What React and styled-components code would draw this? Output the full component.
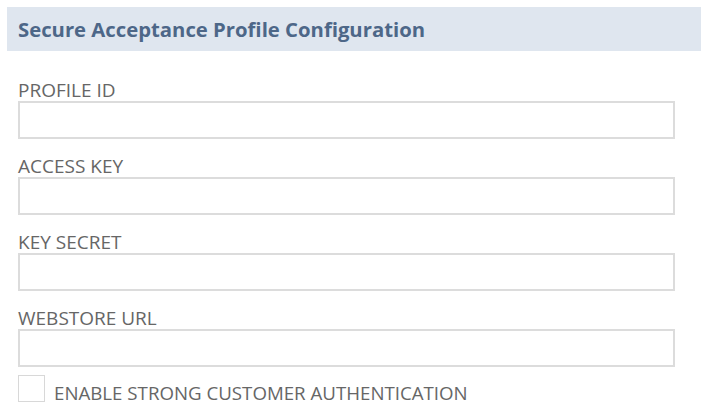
import React from "react";
import styled, { createGlobalStyle } from "styled-components";

const Global = createGlobalStyle`
  html, body { margin: 0; padding: 0; background: #fff; }
  body { font-family: "Open Sans", "Liberation Sans", sans-serif; }
`;

const Page = styled.div`
  width: 701px;
  height: 416px;
  padding: 7px 0 0 7px;
  box-sizing: border-box;
  overflow: hidden;
`;

const Header = styled.div`
  height: 44px;
  background: #dfe6ef;
  display: flex;
  align-items: center;
  padding-left: 11px;
  padding-bottom: 1px;
  box-sizing: border-box;
  font-size: 20.3px;
  font-weight: 700;
  color: #4d6788;
`;

const Form = styled.div`
  display: flex;
  flex-direction: column;
  gap: 16px;
  padding: 28px 0 0 11px;
  width: 657px;
`;

const Field = styled.div`
  display: flex;
  flex-direction: column;
`;

const Label = styled.label`
  font-size: 19px;
  line-height: 22px;
  color: #666;
`;

const Input = styled.input`
  height: 38px;
  box-sizing: border-box;
  border: 2px solid #dcdcdc;
  background: #fff;
  outline: none;
  padding: 0 8px;
  font: inherit;
`;

const CheckRow = styled.label`
  display: flex;
  align-items: flex-end;
  gap: 9px;
  margin-top: -8px;
  font-size: 18.7px;
  color: #666;
`;

const Box = styled.span`
  width: 27px;
  height: 27px;
  box-sizing: border-box;
  border: 1.5px solid #d8d8d8;
  background: #fff;
  flex: none;
`;

const CheckText = styled.span`
  line-height: 22px;
  margin-bottom: -2px;
`;

const fields = ["PROFILE ID", "ACCESS KEY", "KEY SECRET", "WEBSTORE URL"];

export default function App() {
  return (
    <>
      <Global />
      <Page>
        <Header>Secure Acceptance Profile Configuration</Header>
        <Form>
          {fields.map((f) => (
            <Field key={f}>
              <Label>{f}</Label>
              <Input type="text" />
            </Field>
          ))}
          <CheckRow>
            <Box />
            <CheckText>ENABLE STRONG CUSTOMER AUTHENTICATION</CheckText>
          </CheckRow>
        </Form>
      </Page>
    </>
  );
}
